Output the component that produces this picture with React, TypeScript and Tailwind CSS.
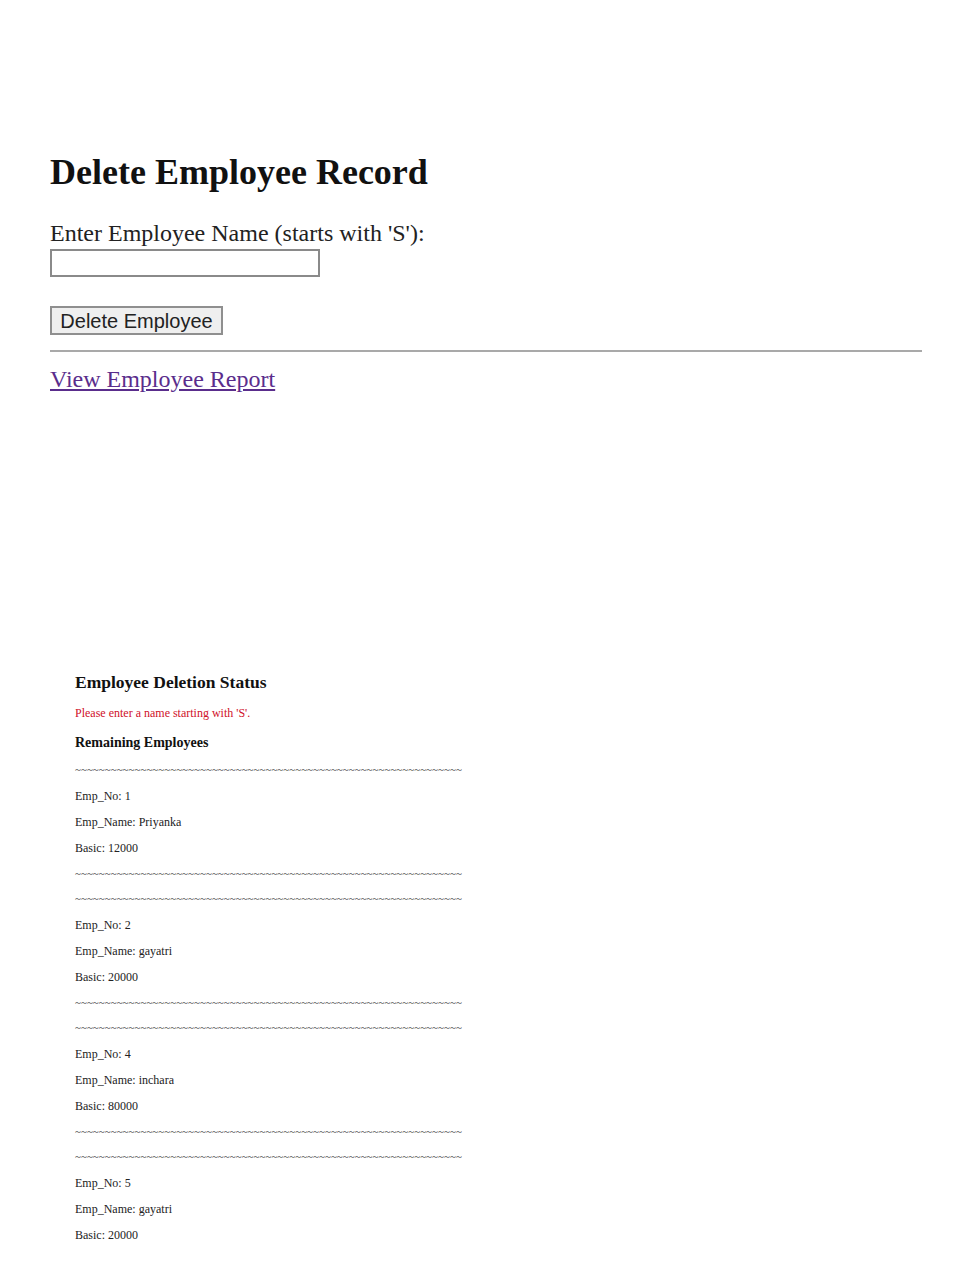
const employees = [
  { no: 1, name: "Priyanka", basic: 12000 },
  { no: 2, name: "gayatri", basic: 20000 },
  { no: 4, name: "inchara", basic: 80000 },
  { no: 5, name: "gayatri", basic: 20000 },
];

const tildes = "~".repeat(65);

function Squiggle() {
  return (
    <div className="h-[25px] w-[390px] whitespace-nowrap text-[11px] leading-[25px] text-[#333]">
      {tildes}
    </div>
  );
}

export default function App() {
  return (
    <div className="min-h-[1280px] bg-white text-black" style={{ fontFamily: '"Liberation Serif", "Times New Roman", serif' }}>
      {/* Form section */}
      <div className="pl-[50px] pr-[48px] pt-[150px]">
        <h1 className="text-[36px] font-bold leading-[44px] text-[#111]">Delete Employee Record</h1>
        <form className="mt-[25px]" onSubmit={(e) => e.preventDefault()}>
          <label className="block text-[24px] leading-[28px] text-[#222]">
            Enter Employee Name (starts with 'S'):
          </label>
          <input
            type="text"
            className="mt-[2px] block h-[28px] w-[270px] border-2 border-[#8a8a8a] bg-white"
          />
          <button
            type="submit"
            className="mt-[29px] h-[29px] w-[173px] border-2 border-[#8f8f8f] bg-[#efefef] text-[20px] leading-[24px] text-[#222]"
            style={{ fontFamily: '"Liberation Sans", Arial, sans-serif' }}
          >
            Delete Employee
          </button>
        </form>
        <hr className="mt-[15px] border-0 border-t-2 border-[#a9a9a9]" />
        <a href="#" className="mt-[12px] inline-block text-[24px] leading-[30px] text-[#5a2d8c] underline">
          View Employee Report
        </a>
      </div>

      {/* Status section */}
      <div className="mt-[278px] pl-[75px]">
        <h3 className="text-[17.5px] font-bold leading-[20px] text-[#111]">Employee Deletion Status</h3>
        <p className="mt-[14px] text-[12px] leading-[14px] text-[#d0102a]">Please enter a name starting with 'S'.</p>
        <h4 className="mt-[14px] text-[14px] font-bold leading-[18px] text-[#111]">Remaining Employees</h4>
        <div className="mt-[5px]">
          {employees.map((emp, i) => (
            <div key={i}>
              <Squiggle />
              <div className="pt-[1px] text-[12px] leading-[26px] text-[#222]">
                <p>Emp_No: {emp.no}</p>
                <p>Emp_Name: {emp.name}</p>
                <p>Basic: {emp.basic}</p>
              </div>
              {i < employees.length - 1 && <Squiggle />}
            </div>
          ))}
        </div>
      </div>
    </div>
  );
}
